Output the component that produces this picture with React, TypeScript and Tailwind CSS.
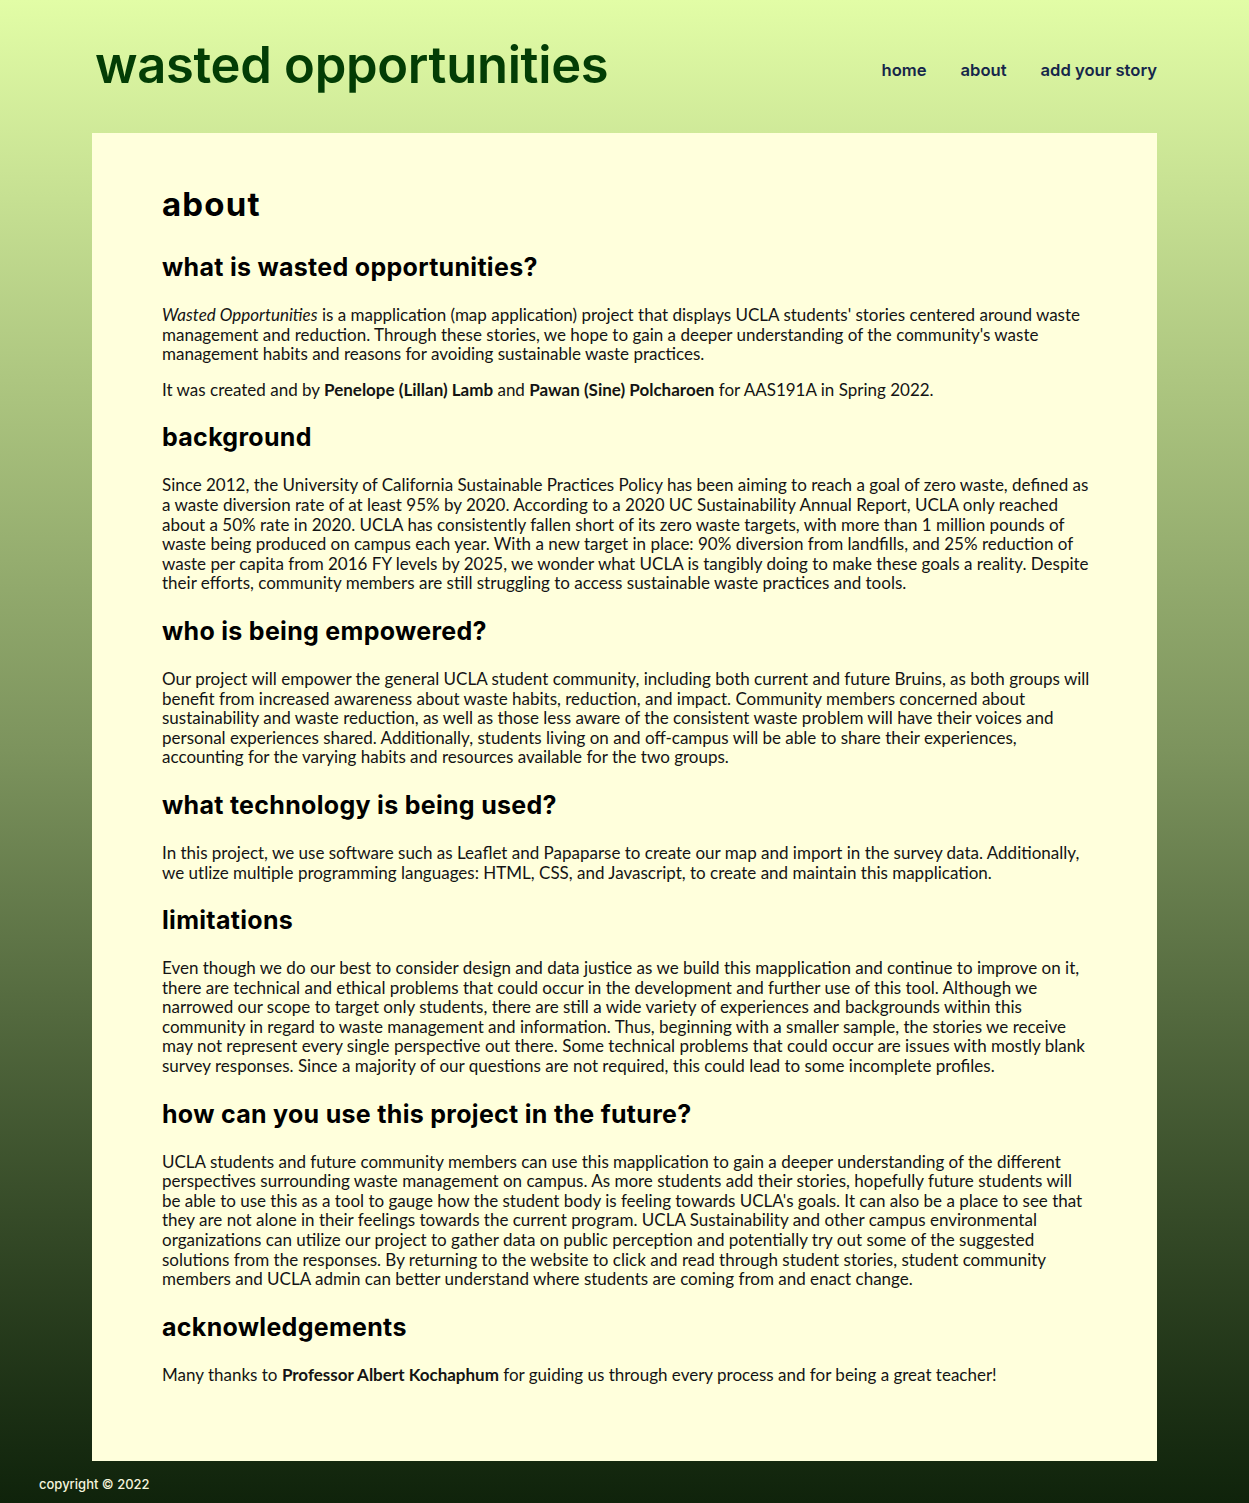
import React from 'react';

const heading = "font-['Inter',sans-serif] font-bold text-black";

function Section({ title, children }: { title: string; children: React.ReactNode }) {
  return (
    <section>
      <h2 className={`${heading} text-[25px] leading-[36px] tracking-[0.3px] my-[20px]`}>{title}</h2>
      {children}
    </section>
  );
}

function P({ children }: { children: React.ReactNode }) {
  return <p className="my-[16px]">{children}</p>;
}

export default function App() {
  return (
    <div className="min-h-screen flex flex-col bg-linear-to-b from-[#e2fda6] via-[#7c935d] to-[#0f230b]">
      <header className="w-[1065px] mx-auto h-[133px] flex items-center justify-between">
        <h1 className="font-['Inter',sans-serif] font-semibold text-[50.7px] leading-none text-[#033d05] ml-[3px] -mt-[2px] tracking-[-0.3px]">
          wasted opportunities
        </h1>
        <nav className="flex items-center gap-[34px] mt-[8px] font-['Inter',sans-serif] font-semibold text-[16.6px] text-[#15264a]">
          <a href="#">home</a>
          <a href="#">about</a>
          <a href="#">add your story</a>
        </nav>
      </header>

      <main className="w-[1065px] mx-auto bg-[#ffffdc] pl-[70px] pr-[66px] pt-[26px] pb-[61px] font-['Lato',sans-serif] text-[17px] leading-[19.6px] text-[#141414]">
        <h1 className={`${heading} text-[33px] leading-[48px] tracking-[1.2px] mt-[21px] mb-[21px]`}>about</h1>

        <h2 className={`${heading} text-[25px] leading-[36px] tracking-[0.3px] mb-[20px]`}>what is wasted opportunities?</h2>
        <P>
          <em>Wasted Opportunities</em> is a mapplication (map application) project that displays UCLA students'
          stories centered around waste management and reduction. Through these stories, we hope to gain a deeper
          understanding of the community's waste management habits and reasons for avoiding sustainable waste
          practices.
        </P>
        <P>
          It was created and by <b>Penelope (Lillan) Lamb</b> and <b>Pawan (Sine) Polcharoen</b> for AAS191A in
          Spring 2022.
        </P>

        <Section title="background">
          <P>
            Since 2012, the University of California Sustainable Practices Policy has been aiming to reach a goal of
            zero waste, defined as a waste diversion rate of at least 95% by 2020. According to a 2020 UC
            Sustainability Annual Report, UCLA only reached about a 50% rate in 2020. UCLA has consistently fallen
            short of its zero waste targets, with more than 1 million pounds of waste being produced on campus each
            year. With a new target in place: 90% diversion from landfills, and 25% reduction of waste per capita from
            2016 FY levels by 2025, we wonder what UCLA is tangibly doing to make these goals a reality. Despite their
            efforts, community members are still struggling to access sustainable waste practices and tools.
          </P>
        </Section>

        <Section title="who is being empowered?">
          <P>
            Our project will empower the general UCLA student community, including both current and future Bruins, as
            both groups will benefit from increased awareness about waste habits, reduction, and impact. Community
            members concerned about sustainability and waste reduction, as well as those less aware of the consistent
            waste problem will have their voices and personal experiences shared. Additionally, students living on and
            off-campus will be able to share their experiences, accounting for the varying habits and resources
            available for the two groups.
          </P>
        </Section>

        <Section title="what technology is being used?">
          <P>
            In this project, we use software such as Leaflet and Papaparse to create our map and import in the survey
            data. Additionally, we utlize multiple programming languages: HTML, CSS, and Javascript, to create and
            maintain this mapplication.
          </P>
        </Section>

        <Section title="limitations">
          <P>
            Even though we do our best to consider design and data justice as we build this mapplication and continue
            to improve on it, there are technical and ethical problems that could occur in the development and further
            use of this tool. Although we narrowed our scope to target only students, there are still a wide variety of
            experiences and backgrounds within this community in regard to waste management and information. Thus,
            beginning with a smaller sample, the stories we receive may not represent every single perspective out
            there. Some technical problems that could occur are issues with mostly blank survey responses. Since a
            majority of our questions are not required, this could lead to some incomplete profiles.
          </P>
        </Section>

        <Section title="how can you use this project in the future?">
          <P>
            UCLA students and future community members can use this mapplication to gain a deeper understanding of the
            different perspectives surrounding waste management on campus. As more students add their stories,
            hopefully future students will be able to use this as a tool to gauge how the student body is feeling
            towards UCLA's goals. It can also be a place to see that they are not alone in their feelings towards the
            current program. UCLA Sustainability and other campus environmental organizations can utilize our project
            to gather data on public perception and potentially try out some of the suggested solutions from the
            responses. By returning to the website to click and read through student stories, student community
            members and UCLA admin can better understand where students are coming from and enact change.
          </P>
        </Section>

        <Section title="acknowledgements">
          <P>
            Many thanks to <b>Professor Albert Kochaphum</b> for guiding us through every process and for being a
            great teacher!
          </P>
        </Section>
      </main>

      <footer className="h-[42px] flex items-center pt-[4px] px-[39px] font-['Inter',sans-serif] font-medium text-[13px] text-[#f4f4dc]">
        copyright © 2022
      </footer>
    </div>
  );
}
